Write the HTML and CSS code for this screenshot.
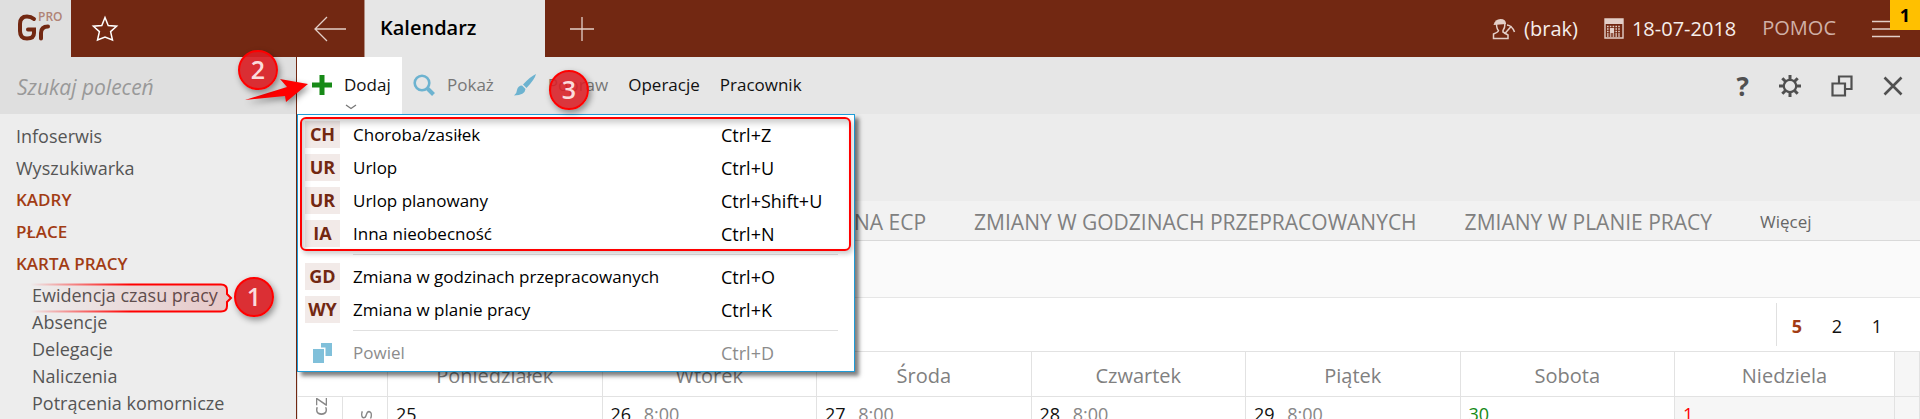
FILE: index.html
```html
<!DOCTYPE html>
<html lang="pl">
<head>
    <meta charset="utf-8">
    <title>Kalendarz</title>
    <link rel="stylesheet" href="styles.css">
</head>
<body>
    <header class="topbar">
        <a class="logo" href="#">
            <svg width="46" height="34" viewBox="0 0 46 34" aria-label="Gr PRO">
                <g fill="none" stroke="#722812" stroke-width="4" stroke-linecap="round">
                    <path d="M18 7 Q15 4.500 11 4.500 Q4 4.500 4 12 V19 Q4 26.500 11 26.500 Q18 26.500 18 21 V17.500 H12"/>
                    <path d="M25 26.500 V21 Q25 14.500 32 14.500"/>
                </g>
            </svg>
            <span class="pro">PRO</span>
        </a>
        <div class="side-tools">
            <button class="icon-btn" aria-label="Ulubione">
                <svg width="28" height="28" viewBox="0 0 28 28"><path d="M14 2.500 L17.200 10.600 L25.600 11.200 L19.600 16.600 L21.500 25 L14 22 L6.500 25 L8.400 16.600 L2.400 11.200 L10.800 10.600 Z" fill="none" stroke="#fff" stroke-width="1.500"/></svg>
            </button>
            <button class="icon-btn" aria-label="Wstecz">
                <svg width="34" height="26" viewBox="0 0 34 26"><path d="M14 1 L2 13 L14 25 M2 13 H33" fill="none" stroke="#e3cfc8" stroke-width="1.300"/></svg>
            </button>
        </div>
        <a class="tab" href="#">Kalendarz</a>
        <button class="icon-btn add-tab" aria-label="Nowa karta">
            <svg width="24" height="24" viewBox="0 0 24 24"><path d="M12 0 V24 M0 12 H24" stroke="#e3cfc8" stroke-width="1.300"/></svg>
        </button>
        <nav class="top-links">
            <a href="#">
                <svg width="24" height="22" viewBox="0 0 24 22"><g fill="none" stroke="#e3cfc8" stroke-width="1.500"><path d="M4.500 5 Q4.500 11 6.500 12.500 Q6.500 14 1.500 16 V20.500 H16 V17 L11 14 V12.500 Q13 10 13 5"/><path d="M12.500 16 L19.500 8 M15 7 Q20 7.500 22.500 14"/></g><path d="M1.500 7 Q3 1 8.500 1 Q14 1 14 6 Z" fill="#e3cfc8"/></svg>
                <span>(brak)</span>
            </a>
            <a href="#">
                <svg width="20" height="21" viewBox="0 0 20 21"><path d="M1 1 H19 V20 H1 Z" fill="none" stroke="#e3cfc8" stroke-width="1.400"/><path d="M1 1 H19 V6 H1 Z" fill="#e3cfc8"/><path d="M3 8.500 H17 M3 11 H17 M3 13.500 H17 M3 16 H17 M3 18 H17" stroke="#e3cfc8" stroke-width="1.300" stroke-dasharray="1.600 1.200"/><path d="M6 10 H10 V15 H6 Z" fill="#e3cfc8"/></svg>
                <span>18-07-2018</span>
            </a>
            <a class="help" href="#">POMOC</a>
            <button class="icon-btn" aria-label="Menu">
                <svg width="28" height="18" viewBox="0 0 28 18"><path d="M0 1.500 H28 M0 9 H28 M0 16.500 H28" stroke="#e3cfc8" stroke-width="1.300"/></svg>
            </button>
        </nav>
        <span class="counter">1</span>
    </header>

    <aside class="sidebar">
        <input class="search" type="text" placeholder="Szukaj poleceń" aria-label="Szukaj poleceń">
        <ul class="menu">
            <li><a href="#">Infoserwis</a></li>
            <li><a href="#">Wyszukiwarka</a></li>
            <li><a class="group" href="#">KADRY</a></li>
            <li><a class="group" href="#">PŁACE</a></li>
            <li>
                <a class="group" href="#">KARTA PRACY</a>
                <ul class="submenu">
                    <li class="marked">
                        <a href="#">Ewidencja czasu pracy</a>
                        <svg class="frame" width="204" height="30" viewBox="0 0 204 30">
                            <defs>
                                <linearGradient id="frameLine"><stop offset="0" stop-color="#f00" stop-opacity="0"/><stop offset=".5" stop-color="#f00"/></linearGradient>
                                <linearGradient id="frameFill"><stop offset="0" stop-color="#c00000" stop-opacity="0"/><stop offset="1" stop-color="#c00000" stop-opacity=".16"/></linearGradient>
                            </defs>
                            <path d="M0 1.500 H191 Q197 1.500 197 7 V11 L201 15 L197 19 V23 Q197 28.500 191 28.500 H0" fill="url(#frameFill)" stroke="url(#frameLine)" stroke-width="2"/>
                        </svg>
                        <span class="step step-1">1</span>
                    </li>
                    <li><a href="#">Absencje</a></li>
                    <li><a href="#">Delegacje</a></li>
                    <li><a href="#">Naliczenia</a></li>
                    <li><a href="#">Potrącenia komornicze</a></li>
                </ul>
            </li>
        </ul>
    </aside>

    <main class="content">
        <div class="toolbar">
            <button class="tool open">
                <svg width="20" height="20" viewBox="0 0 20 20"><path d="M7.500 0 H12.500 V7.500 H20 V12.500 H12.500 V20 H7.500 V12.500 H0 V7.500 H7.500 Z" fill="#178a17"/></svg>
                <span>Dodaj</span>
                <svg class="chevron" width="12" height="6" viewBox="0 0 12 6"><path d="M1 1 L6 4.500 L11 1" fill="none" stroke="#777" stroke-width="1.300"/></svg>
            </button>
            <button class="tool" disabled>
                <svg width="22" height="22" viewBox="0 0 22 22"><circle cx="9" cy="9" r="7.300" fill="none" stroke="#6db3d0" stroke-width="2.600"/><path d="M14 14 L20.500 20.500" stroke="#6db3d0" stroke-width="4"/></svg>
                <span>Pokaż</span>
            </button>
            <button class="tool" disabled>
                <svg width="22" height="22" viewBox="0 0 22 22"><path d="M22 0 Q21 5 12.500 14 L9 10.500 Q17 2 22 0 Z M8 11.500 L11.500 15 Q11 21 0 21.500 Q3 19 3 16 Q4 11.500 8 11.500 Z" fill="#6db3d0"/></svg>
                <span>Popraw</span>
            </button>
            <button class="tool">Operacje</button>
            <button class="tool">Pracownik</button>

            <div class="window-tools">
                <button class="icon-btn question" aria-label="Pomoc">?</button>
                <button class="icon-btn" aria-label="Ustawienia">
                    <svg width="22" height="22" viewBox="0 0 22 22"><circle cx="11" cy="11" r="6.200" fill="none" stroke="#505050" stroke-width="2.200"/><path d="M11 0 V5 M11 17 V22 M0 11 H5 M17 11 H22 M3.300 3.300 L6.800 6.800 M15.200 15.200 L18.700 18.700 M3.300 18.700 L6.800 15.200 M15.200 6.800 L18.700 3.300" stroke="#505050" stroke-width="3"/></svg>
                </button>
                <button class="icon-btn" aria-label="Okna">
                    <svg width="22" height="22" viewBox="0 0 22 22"><path d="M8 8 V1.500 H20.500 V14 H14.500 M1.500 8.500 H14 V20.500 H1.500 Z" fill="none" stroke="#505050" stroke-width="2.200"/></svg>
                </button>
                <button class="icon-btn" aria-label="Zamknij">
                    <svg width="20" height="20" viewBox="0 0 20 20"><path d="M1.500 1.500 L18.500 18.500 M18.500 1.500 L1.500 18.500" stroke="#505050" stroke-width="2.600"/></svg>
                </button>
            </div>

            <ul class="dropdown">
                <li><button><b>CH</b><span>Choroba/zasiłek</span><kbd>Ctrl+Z</kbd></button></li>
                <li><button><b>UR</b><span>Urlop</span><kbd>Ctrl+U</kbd></button></li>
                <li><button><b>UR</b><span>Urlop planowany</span><kbd>Ctrl+Shift+U</kbd></button></li>
                <li><button><b>IA</b><span>Inna nieobecność</span><kbd>Ctrl+N</kbd></button></li>
                <li class="line"></li>
                <li><button><b>GD</b><span>Zmiana w godzinach przepracowanych</span><kbd>Ctrl+O</kbd></button></li>
                <li><button><b>WY</b><span>Zmiana w planie pracy</span><kbd>Ctrl+K</kbd></button></li>
                <li class="line"></li>
                <li>
                    <button disabled>
                        <svg width="20" height="20" viewBox="0 0 20 20"><path d="M8 0 H19 V13 H12.500 V4.500 H8 Z M0 6 H11 V20 H0 Z" fill="#80c0da"/></svg>
                        <span>Powiel</span><kbd>Ctrl+D</kbd>
                    </button>
                </li>
                <li class="red-frame"></li>
            </ul>

            <svg class="arrow" width="64" height="24" viewBox="0 0 64 24"><path d="M0 21 L42 8 L35 0 L63 5 L41 23 L40 17 Z" fill="#f00"/></svg>
            <span class="step step-2">2</span>
            <span class="step step-3">3</span>
        </div>

        <div class="banner"></div>

        <nav class="tabs">
            <a href="#">NA ECP</a>
            <a href="#">ZMIANY W GODZINACH PRZEPRACOWANYCH</a>
            <a href="#">ZMIANY W PLANIE PRACY</a>
            <a class="more" href="#">Więcej</a>
        </nav>

        <div class="filters"></div>

        <div class="weeks">
            <div class="week-buttons">
                <button class="active">5</button>
                <button>2</button>
                <button>1</button>
            </div>
        </div>

        <table class="calendar">
            <colgroup>
                <col class="narrow"><col class="narrow">
                <col><col><col><col><col><col>
                <col class="sunday"><col class="edge">
            </colgroup>
            <thead>
                <tr>
                    <th colspan="2"></th>
                    <th>Poniedziałek</th>
                    <th>Wtorek</th>
                    <th>Środa</th>
                    <th>Czwartek</th>
                    <th>Piątek</th>
                    <th>Sobota</th>
                    <th>Niedziela</th>
                    <th class="edge"></th>
                </tr>
            </thead>
            <tbody>
                <tr>
                    <td class="vertical"><span>cz</span></td>
                    <td class="vertical low"><span>s</span></td>
                    <td>25</td>
                    <td>26 <span class="hours">8:00</span></td>
                    <td>27 <span class="hours">8:00</span></td>
                    <td>28 <span class="hours">8:00</span></td>
                    <td>29 <span class="hours">8:00</span></td>
                    <td class="saturday">30</td>
                    <td class="holiday">1</td>
                    <td class="edge"></td>
                </tr>
            </tbody>
        </table>
    </main>
</body>
</html>
```
FILE: styles.css
```css
* {
    box-sizing: border-box;
}
body {
    margin: 0;
    height: 100vh;
    overflow: hidden;
    display: grid;
    grid-template-columns: 297px 1fr;
    grid-template-rows: 57px 1fr;
    font-family: "Open Sans", "Noto Sans", sans-serif;
    font-size: 18px;
    color: #111;
    background: #fff;
}
a {
    color: inherit;
    text-decoration: none;
}
ul {
    list-style: none;
    margin: 0;
    padding: 0;
}
button {
    font: inherit;
    color: inherit;
    background: none;
    border: 0;
    padding: 0;
}
svg {
    display: block;
}
.icon-btn {
    display: flex;
    align-items: center;
}

/* top bar */
.topbar {
    grid-column: 1 / 3;
    display: flex;
    position: relative;
    background: #722812;
}
.logo {
    width: 71px;
    padding: 12px 0 0 16px;
    position: relative;
    background: #dfdfdf;
}
.pro {
    position: absolute;
    top: 9px;
    left: 38px;
    font-size: 12px;
    line-height: 16px;
    font-weight: 600;
    color: #b08376;
}
.side-tools {
    width: 293px;
    padding: 0 17px 0 20px;
    display: flex;
    justify-content: space-between;
}
.tab {
    width: 181px;
    padding: 0 15px;
    line-height: 56px;
    font-size: 20px;
    font-weight: 600;
    color: #000;
    background: #e6e6e6;
    border-left: 1px solid #b08d82;
}
.add-tab {
    margin-left: 25px;
}
.top-links {
    margin-left: auto;
    padding-right: 20px;
    display: flex;
    gap: 26px;
    color: #f6eeeb;
    font-size: 20px;
    line-height: 54px;
}
.top-links a {
    display: flex;
    align-items: center;
    gap: 8px;
}
.top-links .help {
    color: #d0b0a6;
    margin-right: 10px;
    padding-bottom: 2px;
}
.counter {
    position: absolute;
    top: 0;
    right: 0;
    width: 30px;
    height: 30px;
    line-height: 30px;
    text-align: center;
    font-weight: 700;
    color: #000;
    background: #ffc000;
}

/* left menu */
.sidebar {
    background: #ededed;
    border-right: 1px solid #722812;
    color: #555;
}
.search {
    display: block;
    width: 100%;
    height: 57px;
    padding: 2px 17px 0;
    border: 0;
    background: #dfdfdf;
    font: italic 21px "Open Sans", sans-serif;
}
.search::placeholder {
    color: #999;
}
.menu {
    padding: 6px 0 0 16px;
    line-height: 32px;
}
.menu a {
    display: block;
}
.menu .group {
    color: #a23c14;
    font-size: 17px;
    font-weight: 600;
}
.submenu {
    padding: 2px 0 0 16px;
    line-height: 27px;
}
.marked {
    position: relative;
}
.frame {
    position: absolute;
    left: -2px;
    top: 1px;
}

/* numbered steps */
.step {
    position: absolute;
    z-index: 3;
    width: 40px;
    height: 40px;
    line-height: 34px;
    border: 2px solid #f00;
    border-radius: 50%;
    background: rgba(217, 30, 36, .92);
    color: #fbdcdc;
    font-size: 25px;
    font-weight: 600;
    text-align: center;
    box-shadow: 2px 3px 6px rgba(0, 0, 0, .4);
}
.step-1 {
    left: 202px;
    top: -5px;
}
.step-2 {
    left: -59px;
    top: -7px;
}
.step-3 {
    left: 252px;
    top: 13px;
    background: rgba(217, 30, 36, .88);
}
.arrow {
    position: absolute;
    z-index: 2;
    left: -52px;
    top: 22px;
    filter: drop-shadow(2px 3px 3px rgba(0, 0, 0, .4));
}

/* toolbar */
.toolbar {
    position: relative;
    height: 57px;
    display: flex;
    background: #e6e6e6;
}
.tool {
    display: flex;
    align-items: center;
    gap: 12px;
    padding: 0 9px 2px 11px;
    position: relative;
    font-size: 17px;
}
.tool:disabled {
    color: #777;
}
.open {
    width: 105px;
    padding-left: 15px;
    background: #fff;
}
.chevron {
    position: absolute;
    left: 48px;
    bottom: 4px;
}
.window-tools {
    margin-left: auto;
    padding-right: 17px;
    display: flex;
    gap: 30px;
}
.question {
    font-size: 26px;
    font-weight: 700;
    color: #505050;
}
.dropdown {
    position: absolute;
    z-index: 1;
    left: 0;
    top: 57px;
    width: 558px;
    padding: 3px 7px 2px;
    background: #fff;
    border: 1px solid #1e9bd7;
    box-shadow: 4px 4px 4px rgba(0, 0, 0, .5);
    color: #000;
}
.dropdown button {
    width: 100%;
    height: 33px;
    display: grid;
    grid-template-columns: 35px 1fr 126px;
    column-gap: 13px;
    align-items: center;
    text-align: left;
    font-size: 17px;
}
.dropdown button:disabled {
    color: #8c8c8c;
}
.dropdown b {
    line-height: 27px;
    font-size: 18px;
    text-align: center;
    color: #722812;
    background: #f2eae8;
}
.dropdown kbd {
    font: inherit;
    font-size: 18px;
}
.dropdown svg {
    margin-left: 8px;
}
.line {
    height: 1px;
    margin: 4px 9px 5px 48px;
    background: #e0e0e0;
}
.red-frame {
    position: absolute;
    left: 2px;
    top: 2px;
    width: 551px;
    height: 134px;
    border: 2px solid #f00;
    border-radius: 6px;
    pointer-events: none;
    box-shadow: 2px 3px 5px rgba(0, 0, 0, .2), inset 3px 4px 6px rgba(0, 0, 0, .2);
}

/* calendar */
.banner {
    height: 87px;
    background: #ececec;
}
.tabs {
    height: 40px;
    padding-left: 557px;
    display: flex;
    gap: 48px;
    line-height: 42px;
    font-size: 21px;
    color: #808080;
    background: #f2f2f2;
    border-bottom: 1px solid #d9d9d9;
}
.more {
    font-size: 17px;
    color: #666;
}
.filters {
    height: 57px;
    background: #fafafa;
    border-bottom: 1px solid #e6e6e6;
}
.weeks {
    height: 53px;
    padding: 5px 23px 5px 0;
    display: flex;
    justify-content: flex-end;
}
.week-buttons {
    display: flex;
    border-left: 1px solid #e0e0e0;
}
.week-buttons button {
    width: 40px;
    padding-top: 2px;
}
.week-buttons .active {
    font-weight: 700;
    color: #a23c14;
}
.calendar {
    width: 100%;
    table-layout: fixed;
    border-collapse: collapse;
}
.narrow {
    width: 45px;
}
.sunday {
    width: 220px;
}
col.edge {
    width: 25px;
}
.calendar th,
.calendar td {
    border: 1px solid #e2e2e2;
    padding: 0 8px;
}
.calendar th {
    height: 45px;
    padding-top: 2px;
    font-size: 20px;
    font-weight: 400;
    color: #808080;
}
.calendar td {
    height: 80px;
    padding-top: 4px;
    vertical-align: top;
    line-height: 27px;
}
.hours {
    margin-left: 8px;
    color: #888;
}
.saturday {
    color: #178a17;
}
.calendar .holiday {
    color: #f00;
    background: #f6f6f6;
}
.calendar .edge {
    background: #f6f6f6;
}
.calendar .vertical {
    padding-top: 0;
    font-size: 20px;
    color: #888;
}
.vertical span {
    display: block;
    writing-mode: vertical-rl;
    transform: rotate(180deg);
}
.calendar .low {
    padding-top: 13px;
}
```
